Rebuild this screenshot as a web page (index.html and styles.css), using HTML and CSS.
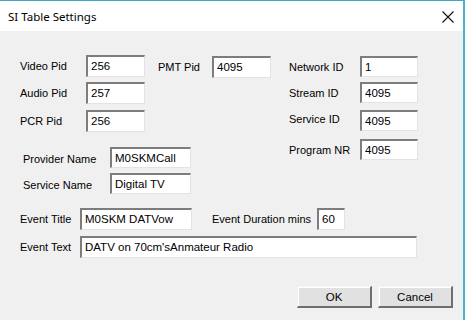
FILE: index.html
```html
<!DOCTYPE html>
<html>
<head>
    <title>SI Table Settings</title>
    <link rel="stylesheet" href="styles.css">
</head>
<body>
    <div class="window">
        <div class="titlebar">
            <span class="title">SI Table Settings</span>
            <span class="close">
                <svg width="12" height="12" viewBox="0 0 12 12">
                    <path d="M0.5 0.5 L11.5 11.5 M11.5 0.5 L0.5 11.5" stroke="#111" stroke-width="1.1" fill="none"/>
                </svg>
            </span>
        </div>

        <div class="client">
            <div class="top">
                <div class="left">
                    <div class="pids">
                        <!-- elementary stream pids -->
                        <div class="col col-a">
                            <div class="row r1"><label>Video Pid</label><input class="box" value="256"></div>
                            <div class="row r2"><label>Audio Pid</label><input class="box" value="257"></div>
                            <div class="row r3"><label>PCR Pid</label><input class="box" value="256"></div>
                        </div>
                        <div class="col col-b">
                            <div class="row"><label>PMT Pid</label><input class="box" value="4095"></div>
                        </div>
                    </div>
                    <div class="names">
                        <div class="row"><label>Provider Name</label><input class="box" value="M0SKMCall"></div>
                        <div class="row n2"><label>Service Name</label><input class="box" value="Digital TV"></div>
                    </div>
                </div>

                <div class="col col-c">
                    <div class="row c1"><label>Network ID</label><input class="box" value="1"></div>
                    <div class="row c2"><label>Stream ID</label><input class="box" value="4095"></div>
                    <div class="row c3"><label>Service ID</label><input class="box" value="4095"></div>
                    <div class="row c4"><label>Program NR</label><input class="box" value="4095"></div>
                </div>
            </div>

            <div class="event">
                <div class="row">
                    <label class="ev-label">Event Title</label>
                    <input class="box ev-title" value="M0SKM DATVow">
                    <label class="dur-label">Event Duration mins</label>
                    <input class="box ev-dur" value="60">
                </div>
                <div class="row ev2">
                    <label class="ev-label">Event Text</label>
                    <input class="box ev-text" value="DATV on 70cm'sAnmateur Radio">
                </div>
            </div>

            <div class="buttons">
                <button class="btn">OK</button>
                <button class="btn">Cancel</button>
            </div>
        </div>
    </div>
</body>
</html>
```

FILE: styles.css
```css
body {
    margin: 0;
    background-color: #f0f0f0;
    font-family: "Liberation Sans", Arial, sans-serif;
    font-size: 11px;
    color: #000000;
}
.window {
    width: 463px;
    height: 319px;
    border-top: 1px solid #3fa9c2;
    border-right: 2px solid #4db3ca;
    background-color: #f0f0f0;
}
.titlebar {
    height: 30px;
    background-color: #FFFFFF;
    display: flex;
    align-items: center;
    justify-content: space-between;
}
.title {
    font-family: "Noto Sans", sans-serif;
    font-size: 11.5px;
    margin-left: 8px;
    margin-top: 1px;
}
.close {
    display: flex;
    margin-right: 9px;
    margin-top: 1px;
}
.client {
    padding: 24px 10px 0 20px;
}
.top {
    display: flex;
}
.pids {
    display: flex;
}
.row {
    display: flex;
    align-items: center;
}
label {
    white-space: nowrap;
}
.box {
    box-sizing: border-box;
    height: 22px;
    margin: 0;
    padding: 0 0 1px 3px;
    background-color: #FFFFFF;
    border-style: solid;
    border-width: 2px 1px 1px 2px;
    border-color: #7d7d7d #e3e3e3 #e3e3e3 #7d7d7d;
    font-family: "Liberation Sans", Arial, sans-serif;
    font-size: 11.5px;
    color: #000000;
    outline: none;
}
/* column 1 */
.col-a label {
    width: 66px;
}
.col-a .box {
    width: 59px;
}
.col-a .r2 {
    margin-top: 5px;
}
.col-a .r3 {
    margin-top: 6px;
}
/* column 2 */
.col-b {
    margin-left: 13px;
    margin-top: 1px;
}
.col-b label {
    width: 54px;
}
.col-b .box {
    width: 59px;
}
/* names */
.names {
    margin-top: 15px;
    padding-left: 3px;
}
.names label {
    width: 87px;
    padding-top: 3px;
}
.names .box {
    width: 81px;
    height: 21px;
}
.names .n2 {
    margin-top: 5px;
}
/* column 3 */
.col-c {
    margin-left: 18px;
    margin-top: 1px;
}
.col-c label {
    width: 71px;
}
.col-c .box {
    width: 58px;
    height: 21px;
}
.col-c .c2 {
    margin-top: 5px;
}
.col-c .c3 {
    margin-top: 7px;
}
.col-c .c3 label {
    padding-bottom: 3px;
}
.col-c .c4 {
    margin-top: 8px;
}
/* event */
.event {
    margin-top: 14px;
}
.ev-label {
    width: 60px;
}
.ev-title {
    width: 112px;
}
.dur-label {
    margin-left: 20px;
    width: 105px;
}
.ev-dur {
    width: 28px;
}
.ev2 {
    margin-top: 6px;
}
.ev-text {
    width: 337px;
}
/* buttons */
.buttons {
    display: flex;
    justify-content: flex-end;
    gap: 6px;
    margin-top: 28px;
}
.btn {
    box-sizing: border-box;
    width: 75px;
    height: 22px;
    margin: 0;
    padding: 0;
    background-color: #e1e1e1;
    border-style: solid;
    border-width: 1px 2px 2px 1px;
    border-color: #f4f4f4 #6e6e6e #6e6e6e #f4f4f4;
    box-shadow: inset 1px 1px 0 #FFFFFF;
    font-family: "Liberation Sans", Arial, sans-serif;
    font-size: 11.5px;
    color: #000000;
}
```
